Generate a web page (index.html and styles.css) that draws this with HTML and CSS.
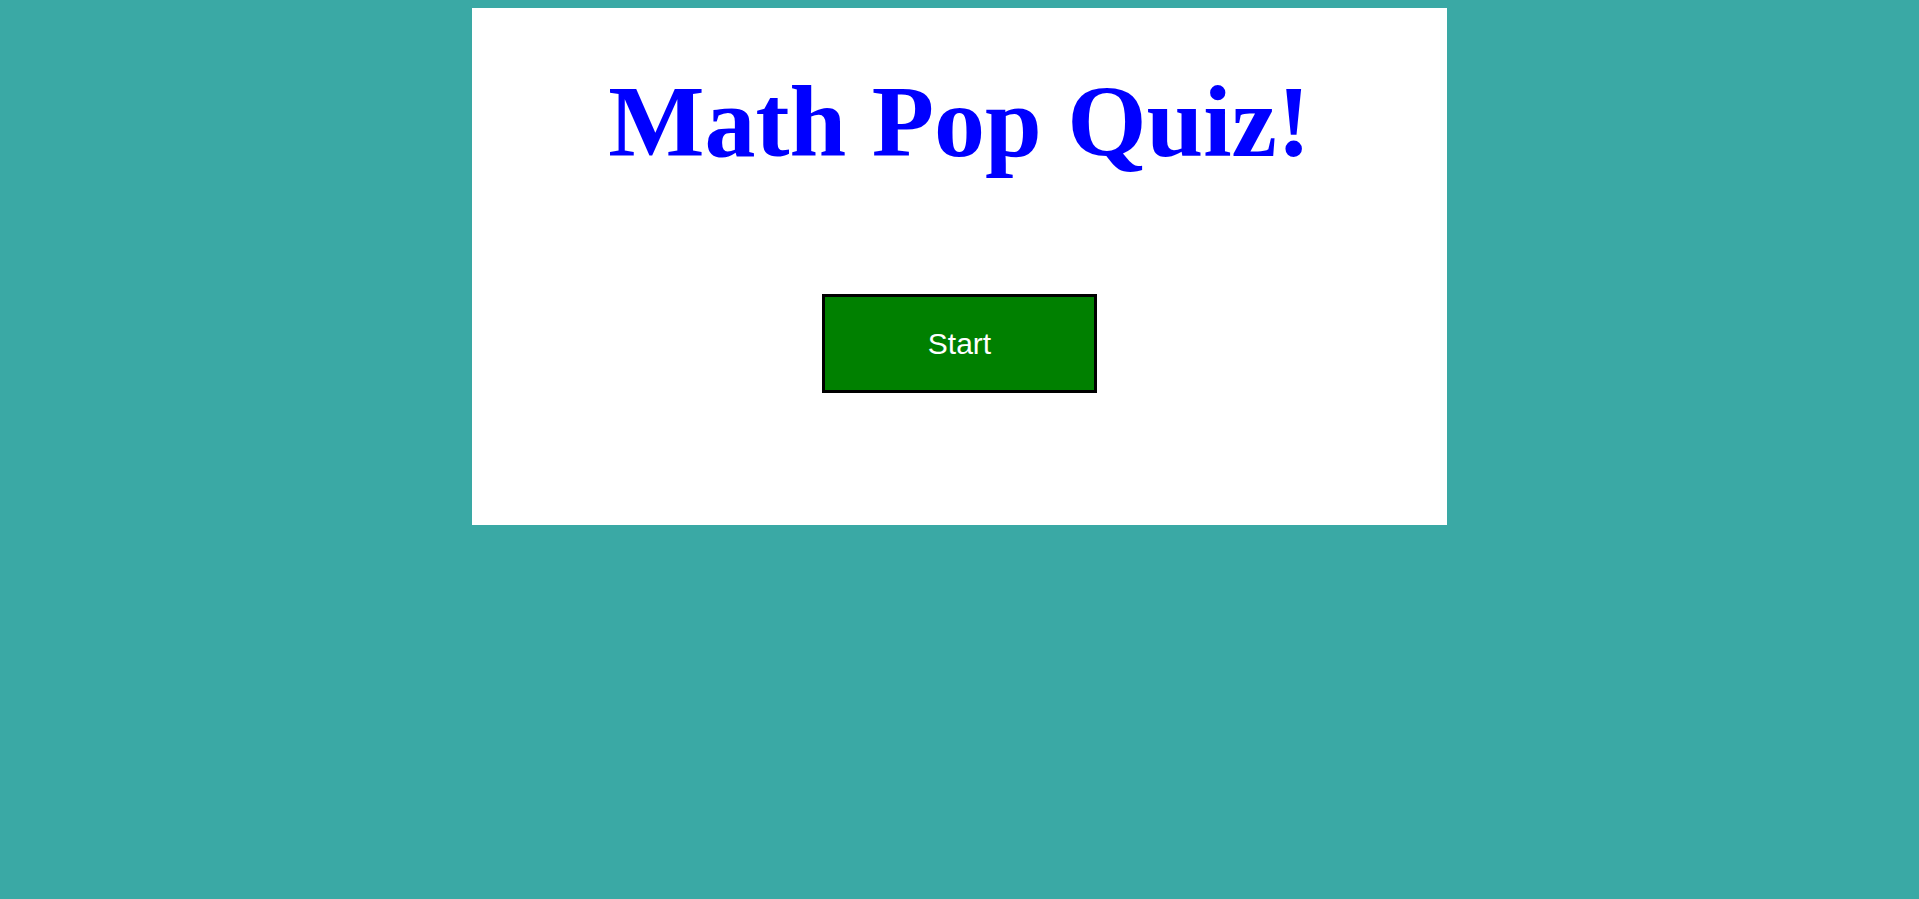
FILE: index.html
```html
<!DOCTYPE html>
<html>
<head>
<meta charset="utf-8">
<link rel="stylesheet" href="styles.css">
</head>
<body>
<main class="quiz">
  <h1 class="title">Math Pop Quiz!</h1>
  <button class="start">Start</button>
</main>
</body>
</html>
```
FILE: styles.css
```css
html, body {
  margin: 0;
  padding: 0;
}
body {
  background: #3aa9a5;
  padding-top: 8px;
}
.quiz {
  width: 975px;
  height: 517px;
  margin: 0 auto;
  background: #ffffff;
  display: flex;
  flex-direction: column;
  align-items: center;
  box-sizing: border-box;
  padding-top: 58px;
}
.title {
  margin: 0;
  font-family: "Liberation Serif", "Times New Roman", serif;
  font-weight: bold;
  font-size: 102px;
  line-height: 112px;
  color: #0000ff;
}
.start {
  margin-top: 116px;
  width: 275px;
  height: 99px;
  box-sizing: border-box;
  border: 3px solid #000000;
  background: #008000;
  color: #ffffff;
  font-family: "Liberation Sans", Arial, sans-serif;
  font-size: 30px;
  padding: 0;
}
```
